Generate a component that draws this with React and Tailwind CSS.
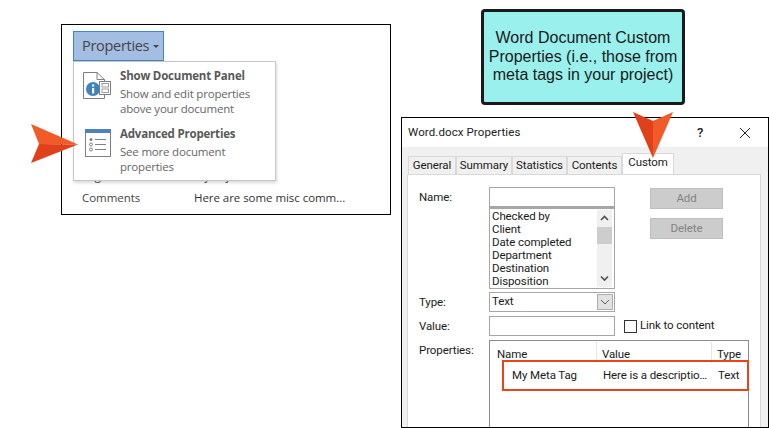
const menuItems = [
  { title: "Show Document Panel", lines: ["Show and edit properties", "above your document"], icon: <PanelIcon /> },
  { title: "Advanced Properties", lines: ["See more document", "properties"], icon: <AdvancedIcon /> },
];

const tabs = [
  { label: "General", width: "w-[48px]" },
  { label: "Summary", width: "w-[56px]" },
  { label: "Statistics", width: "w-[55px]" },
  { label: "Contents", width: "w-[55px]" },
];

const customProps = ["Checked by", "Client", "Date completed", "Department", "Destination", "Disposition"];

function PanelIcon() {
  return (
    <svg width="30" height="30" viewBox="0 0 30 30" fill="none">
      <path d="M1.5 1.5H15L22.5 8.5V27.5H1.5Z" fill="#fff" stroke="#808080" />
      <path d="M15 1.5V8.5H22.5" stroke="#808080" />
      <rect x="17.5" y="10.5" width="11" height="13" fill="#fff" stroke="#808080" />
      <rect x="20" y="12.5" width="6.5" height="3.5" fill="#fff" stroke="#a0a0a0" />
      <rect x="20" y="18" width="6.5" height="3.5" fill="#fff" stroke="#a0a0a0" />
      <circle cx="11" cy="18" r="7" fill="#3f82bf" />
      <rect x="10" y="17" width="2.2" height="5.5" fill="#fff" />
      <rect x="10" y="13.5" width="2.2" height="2" fill="#fff" />
    </svg>
  );
}

function AdvancedIcon() {
  return (
    <svg width="26" height="28" viewBox="0 0 26 28" fill="none" className="ml-[3px]">
      <rect x="0.5" y="0.5" width="25" height="27" fill="#fff" stroke="#808080" />
      <rect x="0" y="0" width="26" height="4" fill="#4f81bd" />
      <circle cx="6" cy="10.5" r="1.5" fill="#808080" />
      <circle cx="6" cy="15.5" r="1.5" stroke="#808080" />
      <circle cx="6" cy="20.5" r="1.5" stroke="#808080" />
      <path d="M10 10.5H21M10 15.5H21M10 20.5H21" stroke="#808080" />
    </svg>
  );
}

function ArrowRight() {
  return (
    <svg width="48" height="40" viewBox="0 0 48 40" className="absolute left-[30px] top-[124px]">
      <path d="M1 0L48 20.5L9 20Z" fill="#f15a29" />
      <path d="M1 39L48 20.5L9 20Z" fill="#e0401a" />
    </svg>
  );
}

function ArrowDown() {
  return (
    <svg width="40" height="46" viewBox="0 0 40 46" className="absolute left-[633px] top-[112px]">
      <path d="M0 0L20 9V46Z" fill="#e0401a" />
      <path d="M40 0L20 9V46Z" fill="#f15a29" />
    </svg>
  );
}

function InfoPanel() {
  return (
    <div className="relative w-[330px] h-[191px] border border-black ml-[61px] mt-[24px] bg-white font-['Open_Sans',sans-serif] text-[11.5px] shrink-0">
      <div className="absolute left-[11px] top-[6px] w-[91px] h-[30px] flex items-center pl-[8px] gap-[4px] bg-[#a4bde3] border border-[#3c88c4] text-[#444] text-[14.5px] tracking-[-0.3px]">
        Properties
        <span className="w-0 h-0 mt-[1px] border-x-[3px] border-x-transparent border-t-[3px] border-t-[#444]" />
      </div>

      <div className="pl-[20px] pt-[140px] text-[#333] leading-[21px] tracking-[-0.05px]">
        <div className="flex mb-[1px]">
          <span className="w-[112px] text-[#444]">Tags</span>
          <span>My keywords</span>
        </div>
        <div className="flex">
          <span className="w-[112px] text-[#444]">Comments</span>
          <span>Here are some misc comm...</span>
        </div>
      </div>

      <div className="absolute left-[11px] top-[36px] w-[203px] h-[120px] bg-white border border-[#c6c6c6] shadow-[1px_2px_3px_rgba(0,0,0,0.15)] pt-[6px] flex flex-col gap-[10px] tracking-[-0.2px]">
        {menuItems.map((item) => (
          <div key={item.title} className="flex">
            <div className="w-[46px] pl-[8px] pt-[3px] shrink-0">{item.icon}</div>
            <div className="text-[#666] leading-[15px]">
              <div className="font-bold text-[#595959] mb-[3px]">{item.title}</div>
              {item.lines.map((line) => (
                <div key={line}>{line}</div>
              ))}
            </div>
          </div>
        ))}
      </div>
    </div>
  );
}

function Callout() {
  return (
    <div className="w-[204px] h-[96px] ml-[80px] mt-[9px] flex items-center justify-center bg-[#99f0ec] border-[3px] border-[#1a1a1a] rounded-[4px] font-['Liberation_Sans',sans-serif] text-[16px] leading-[18.5px] text-center text-[#1a1a1a]">
      <p>
        Word Document Custom
        <br />
        Properties (i.e., those from
        <br />
        meta tags in your project)
      </p>
    </div>
  );
}

function PropertiesDialog() {
  return (
    <div className="w-[368px] h-[311px] mt-[12px] border border-black bg-[#f0f0f0] overflow-hidden font-['Roboto',sans-serif] text-[11.5px] text-[#1a1a1a] tracking-[-0.1px]">
      <div className="h-[29px] bg-white flex items-center pl-[6px] text-[#222]">
        <span className="flex-1 tracking-[0.1px]">Word.docx Properties</span>
        <span className="w-[20px] text-center text-[13px] font-medium">?</span>
        <svg width="14" height="14" viewBox="0 0 14 14" className="ml-[28px] mr-[16px]">
          <path d="M2 2L12 12M12 2L2 12" stroke="#222" strokeWidth="1" />
        </svg>
      </div>

      <div className="flex items-end h-[27px] pl-[6px]">
        {tabs.map((tab) => (
          <div
            key={tab.label}
            className={`${tab.width} h-[18px] flex items-center justify-center bg-[#f0f0f0] border border-b-0 border-[#d9d9d9]`}
          >
            {tab.label}
          </div>
        ))}
        <div className="w-[52px] h-[21px] flex items-center justify-center pb-[3px] bg-white border border-b-0 border-[#d9d9d9]">
          Custom
        </div>
      </div>

      <div className="ml-[5px] mr-[7px] h-[270px] bg-white border border-[#d9d9d9] pl-[11px] pt-[12px]">
        <div className="flex">
          <div className="w-[70px] pt-[2px] leading-[16px]">Name:</div>
          <div className="w-[126px]">
            <div className="h-[20px] border border-[#a6a6a6]" />
            <div className="h-[82px] border border-[#a6a6a6] border-t-2 flex">
              <div className="flex-1 pl-[2px] pt-[1px] leading-[13px]">
                {customProps.map((name) => (
                  <div key={name}>{name}</div>
                ))}
              </div>
              <div className="w-[15px] my-[1px] mr-[2px] bg-[#f0f0f0] flex flex-col items-center">
                <svg width="15" height="17" viewBox="0 0 15 17">
                  <path d="M4 10L7.5 6.5L11 10" fill="none" stroke="#505050" strokeWidth="1.6" />
                </svg>
                <div className="w-full h-[17px] bg-[#cdcdcd]" />
                <svg width="15" height="17" viewBox="0 0 15 17" className="mt-auto">
                  <path d="M4 6.5L7.5 10L11 6.5" fill="none" stroke="#505050" strokeWidth="1.6" />
                </svg>
              </div>
            </div>
          </div>
          <div className="ml-[35px] pt-[1px] flex flex-col gap-[9px]">
            <div className="w-[73px] h-[21px] flex items-center justify-center bg-[#cccccc] border border-[#bfbfbf] text-[#838383]">Add</div>
            <div className="w-[73px] h-[21px] flex items-center justify-center bg-[#cccccc] border border-[#bfbfbf] text-[#838383]">Delete</div>
          </div>
        </div>

        <div className="flex items-center mt-[3px]">
          <div className="w-[70px] pt-[2px]">Type:</div>
          <div className="w-[126px] h-[20px] border border-[#a6a6a6] flex items-center pl-[2px]">
            <span className="flex-1">Text</span>
            <div className="w-[16px] h-[16px] mr-[1px] bg-[#e1e1e1] border border-[#adadad] flex items-center justify-center">
              <svg width="10" height="6" viewBox="0 0 10 6">
                <path d="M1 1L5 5L9 1" fill="none" stroke="#606060" />
              </svg>
            </div>
          </div>
        </div>

        <div className="flex items-center mt-[4px]">
          <div className="w-[70px] pt-[2px]">Value:</div>
          <div className="w-[126px] h-[20px] border border-[#a6a6a6]" />
          <div className="w-[13px] h-[13px] ml-[9px] mr-[3px] border border-[#333]" />
          <span>Link to content</span>
        </div>

        <div className="flex mt-[4px]">
          <div className="w-[70px] pt-[2px] leading-[16px]">Properties:</div>
          <div className="relative w-[260px] h-[100px] border border-[#8c8c8c] pt-[1px]">
            <div className="flex h-[24px] items-end pb-[3px] leading-[14px]">
              <div className="w-[107px] h-full pl-[7px] pb-[2px] flex items-end border-r border-[#e5e5e5]">Name</div>
              <div className="w-[115px] h-full pl-[5px] pb-[2px] flex items-end border-r border-[#e5e5e5]">Value</div>
              <div className="pl-[5px] pb-[2px]">Type</div>
            </div>
            <div className="flex h-[20px] items-center">
              <div className="w-[107px] pl-[22px]">My Meta Tag</div>
              <div className="w-[115px] pl-[6px] whitespace-nowrap">Here is a descriptio…</div>
              <div className="pl-[6px]">Text</div>
            </div>
            <div className="absolute left-[12px] top-[19px] w-[247px] h-[31px] border-2 border-[#e8431a]" />
          </div>
        </div>
      </div>
    </div>
  );
}

export default function App() {
  return (
    <div className="relative w-[769px] h-[428px] bg-white flex overflow-hidden">
      <InfoPanel />
      <div className="ml-[10px] w-[368px] shrink-0">
        <Callout />
        <PropertiesDialog />
      </div>
      <ArrowRight />
      <ArrowDown />
    </div>
  );
}
